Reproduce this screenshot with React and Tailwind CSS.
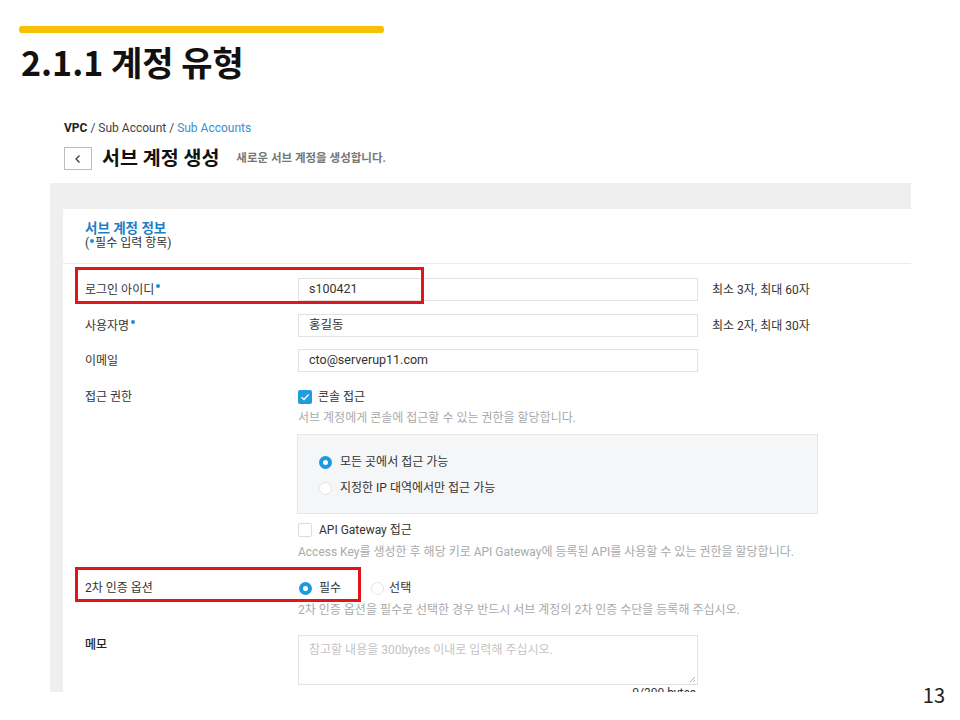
import React from 'react';

const font = { fontFamily: 'Roboto, "Noto Sans CJK KR", sans-serif' };

const Dot = () => (
  <span className="inline-block w-[4px] h-[4px] rounded-full bg-[#1c8fd6] ml-[2px] -translate-y-[6px]" />
);

const Radio = ({ on }) =>
  on ? (
    <span className="w-[13px] h-[13px] rounded-full bg-[#1b9ae0] flex items-center justify-center shrink-0">
      <span className="w-[5px] h-[5px] rounded-full bg-white" />
    </span>
  ) : (
    <span className="w-[13px] h-[13px] rounded-full bg-white border border-[#e4e4e4] shrink-0" />
  );

const Check = ({ on }) =>
  on ? (
    <span className="w-[14px] h-[14px] rounded-[2px] bg-[#1f9ddd] flex items-center justify-center shrink-0">
      <svg width="10" height="10" viewBox="0 0 10 10">
        <path d="M1.5 5.2 L4 7.5 L8.6 2.6" fill="none" stroke="white" strokeWidth="1.4" />
      </svg>
    </span>
  ) : (
    <span className="w-[14px] h-[14px] rounded-[2px] bg-white border border-[#dcdcdc] shrink-0" />
  );

const InputRow = ({ label, req, value, hint, mt }) => (
  <div className={`flex items-center h-[23px] ${mt}`}>
    <div className="w-[213px] text-[12px] text-[#333]">
      {label}
      {req && <Dot />}
    </div>
    <div className="w-[400px] h-[23px] border border-[#e2e2e2] flex items-center px-[10px] text-[12.5px] text-[#333]">
      {value}
    </div>
    {hint && <div className="ml-[14px] text-[12px] text-[#333]">{hint}</div>}
  </div>
);

export default function App() {
  return (
    <div className="relative w-[960px] h-[720px] bg-white overflow-hidden">
      <div className="ml-[19px] mt-[26px] w-[365px] h-[7px] rounded-[3px] bg-[#f8c000]" />
      <h1
        className="ml-[21px] mt-[9px] h-[40px] leading-[40px] text-[34px] font-bold text-[#111]"
        style={{ fontFamily: '"Noto Sans CJK KR", sans-serif' }}
      >
        2.1.1 계정 유형
      </h1>

      {/* embedded console screenshot */}
      <div className="ml-[50px] mt-[33px] w-[861px] h-[577px] overflow-hidden" style={font}>
        <div className="pl-[14px] pt-[6px]">
          <div className="h-[14px] leading-[14px] text-[12px] text-[#444]">
            <span className="font-bold text-[#222]">VPC</span> / Sub Account /{' '}
            <span className="text-[#3b8fd1]">Sub Accounts</span>
          </div>
          <div className="mt-[12px] h-[23px] flex items-center">
            <div className="w-[28px] h-[23px] border border-[#bdbdbd] flex items-center justify-center">
              <svg width="10" height="10" viewBox="0 0 10 10">
                <path d="M6.5 1.5 L3 5 L6.5 8.5" fill="none" stroke="#333" strokeWidth="1.2" />
              </svg>
            </div>
            <div className="ml-[10px] text-[19.5px] font-bold text-[#111]">서브 계정 생성</div>
            <div className="ml-[17px] text-[11.5px] font-bold text-[#777]">새로운 서브 계정을 생성합니다.</div>
          </div>
        </div>

        <div className="mt-[13px] bg-[#efefef] pl-[13px] pt-[26px] h-[600px]">
          <div className="relative bg-white h-full">
            <div className="pl-[22px] pt-[11px]">
              <div className="h-[16px] leading-[16px] text-[13.5px] font-bold text-[#1f7fc6]">서브 계정 정보</div>
              <div className="h-[14px] leading-[14px] text-[12px] text-[#333]">
                (<span className="inline-block w-[4px] h-[4px] rounded-full bg-[#1c8fd6] mx-[1px] -translate-y-[4px]" />필수 입력 항목)
              </div>
            </div>
            <div className="mt-[13px] border-t border-[#ececec]" />

            <div className="pl-[22px] pt-[14px]">
              <InputRow label="로그인 아이디" req value="s100421" hint="최소 3자, 최대 60자" />
              <InputRow label="사용자명" req value="홍길동" hint="최소 2자, 최대 30자" mt="mt-[13px]" />
              <InputRow label="이메일" value="cto@serverup11.com" mt="mt-[12px]" />

              <div className="flex items-start mt-[17px]">
                <div className="w-[213px] h-[16px] leading-[16px] text-[12px] text-[#333]">접근 권한</div>
                <div>
                  <div className="flex items-center h-[16px]">
                    <Check on />
                    <span className="ml-[6px] text-[12px] text-[#333]">콘솔 접근</span>
                  </div>
                  <div className="mt-[6px] h-[14px] leading-[14px] text-[12px] text-[#aaa]">
                    서브 계정에게 콘솔에 접근할 수 있는 권한을 할당합니다.
                  </div>
                  <div className="mt-[9px] -ml-[1px] w-[521px] h-[80px] bg-[#f5f6f7] border border-[#e6e6e6] pl-[21px] pt-[19px]">
                    <div className="flex items-center h-[16px]">
                      <Radio on />
                      <span className="ml-[8px] text-[12px] text-[#333]">모든 곳에서 접근 가능</span>
                    </div>
                    <div className="flex items-center h-[16px] mt-[10px]">
                      <Radio />
                      <span className="ml-[8px] text-[12px] text-[#333]">지정한 IP 대역에서만 접근 가능</span>
                    </div>
                  </div>
                  <div className="flex items-center h-[16px] mt-[8px]">
                    <Check />
                    <span className="ml-[7px] text-[12px] text-[#333]">API Gateway 접근</span>
                  </div>
                  <div className="mt-[7px] h-[14px] leading-[14px] text-[12px] text-[#aaa]">
                    Access Key를 생성한 후 해당 키로 API Gateway에 등록된 API를 사용할 수 있는 권한을 할당합니다.
                  </div>
                </div>
              </div>

              <div className="flex items-start mt-[21px]">
                <div className="w-[213px] h-[16px] leading-[16px] text-[12px] text-[#333]">2차 인증 옵션</div>
                <div>
                  <div className="flex items-center h-[16px] pl-[1px]">
                    <Radio on />
                    <span className="ml-[7px] text-[12px] text-[#333]">필수</span>
                    <span className="ml-[30px] flex">
                      <Radio />
                    </span>
                    <span className="ml-[5px] text-[12px] text-[#333]">선택</span>
                  </div>
                  <div className="mt-[7px] h-[14px] leading-[14px] text-[12px] text-[#aaa]">
                    2차 인증 옵션을 필수로 선택한 경우 반드시 서브 계정의 2차 인증 수단을 등록해 주십시오.
                  </div>
                </div>
              </div>

              <div className="flex items-start mt-[18px]">
                <div className="w-[213px] pt-[2px] h-[16px] leading-[16px] text-[12px] font-medium text-[#222]">메모</div>
                <div className="w-[400px]">
                  <div className="relative h-[50px] border border-[#e2e2e2] px-[10px] pt-[5px] text-[12px] text-[#c4c4c4]">
                    참고할 내용을 300bytes 이내로 입력해 주십시오.
                    <svg className="absolute right-[1px] bottom-[1px]" width="7" height="7" viewBox="0 0 7 7">
                      <path d="M6 1 L1 6 M6 4 L4 6" stroke="#999" strokeWidth="0.8" />
                    </svg>
                  </div>
                  <div className="mt-[1px] leading-[14px] text-right text-[12px] text-[#333] pr-[2px]">0/300 bytes</div>
                </div>
              </div>
            </div>

            {/* red highlight boxes */}
            <div className="absolute left-[12px] top-[58px] w-[349px] h-[37px] border-[3px] border-[#e0161b]" />
            <div className="absolute left-[12px] top-[358px] w-[286px] h-[35px] border-[3px] border-[#e0161b]" />
          </div>
        </div>
      </div>

      <div
        className="absolute right-[15px] bottom-[10px] text-[20px] text-[#222]"
        style={{ fontFamily: '"Noto Sans CJK KR", sans-serif' }}
      >
        13
      </div>
    </div>
  );
}
